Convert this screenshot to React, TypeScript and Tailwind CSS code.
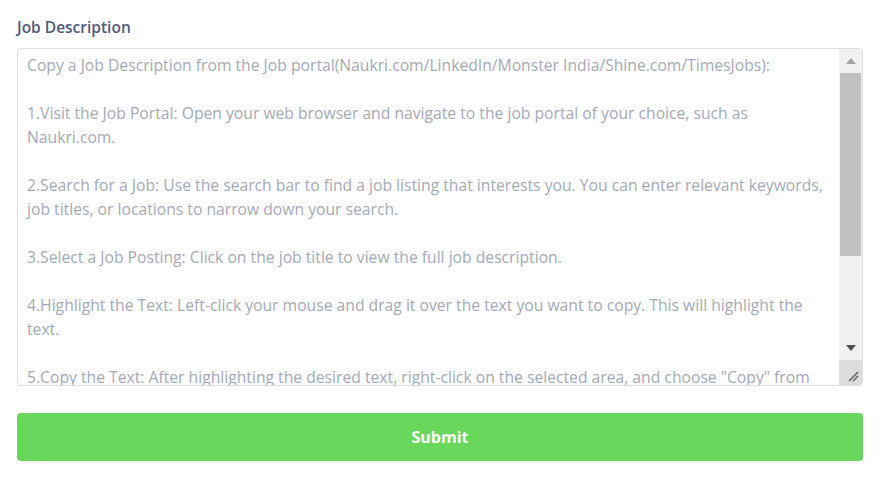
import React from "react";

const placeholderText = `Copy a Job Description from the Job portal(Naukri.com/LinkedIn/Monster India/Shine.com/TimesJobs):

1.Visit the Job Portal: Open your web browser and navigate to the job portal of your choice, such as Naukri.com.

2.Search for a Job: Use the search bar to find a job listing that interests you. You can enter relevant keywords, job titles, or locations to narrow down your search.

3.Select a Job Posting: Click on the job title to view the full job description.

4.Highlight the Text: Left-click your mouse and drag it over the text you want to copy. This will highlight the text.

5.Copy the Text: After highlighting the desired text, right-click on the selected area, and choose "Copy" from the context menu. Alternatively, you can press Ctrl+C (Cmd+C on Mac).

6.Paste the Text: Click inside this box, right-click and choose "Paste", or press Ctrl+V (Cmd+V on Mac).

7.Submit: Review the pasted job description and click the Submit button below.`;

const Scrollbar = () => (
  <div className="w-[23px] shrink-0 flex flex-col bg-[#f1f1f1]">
    <div className="h-[24px] flex items-center justify-center">
      <svg width="10" height="6" viewBox="0 0 10 6">
        <path d="M5 0 L10 6 L0 6 Z" fill="#a3a3a3" />
      </svg>
    </div>
    <div className="h-[183px] mx-[1px] bg-[#c1c1c1]" />
    <div className="flex-1" />
    <div className="h-[24px] flex items-center justify-center">
      <svg width="10" height="6" viewBox="0 0 10 6">
        <path d="M0 0 L10 0 L5 6 Z" fill="#505050" />
      </svg>
    </div>
    <div className="h-[25px] bg-[#dcdcdc] flex items-end justify-end p-[3px]">
      <svg width="12" height="12" viewBox="0 0 12 12">
        <path d="M11 2 L2 11 M11 6 L6 11" stroke="#555" strokeWidth="1.3" />
      </svg>
    </div>
  </div>
);

export default function App() {
  return (
    <div
      className="w-[885px] h-[478px] bg-white px-[17px] pt-[16px]"
      style={{ fontFamily: '"Open Sans", "Liberation Sans", sans-serif' }}
    >
      <label className="block text-[15.5px] leading-[22px] font-semibold text-[#4f5a7c]">
        Job Description
      </label>
      <div className="mt-[10px] flex w-[846px] h-[338px] border border-[#dcdfe4] rounded-[4px] overflow-hidden">
        <textarea
          className="flex-1 resize-none px-[9px] py-[4px] text-[15.7px] leading-[24px] text-[#a3aab6] outline-none overflow-hidden"
          defaultValue={placeholderText}
        />
        <Scrollbar />
      </div>
      <button
        type="button"
        className="mt-[27px] w-[846px] h-[48px] rounded-[4px] bg-[#68d75c] text-white text-[16px] font-bold"
      >
        Submit
      </button>
    </div>
  );
}
